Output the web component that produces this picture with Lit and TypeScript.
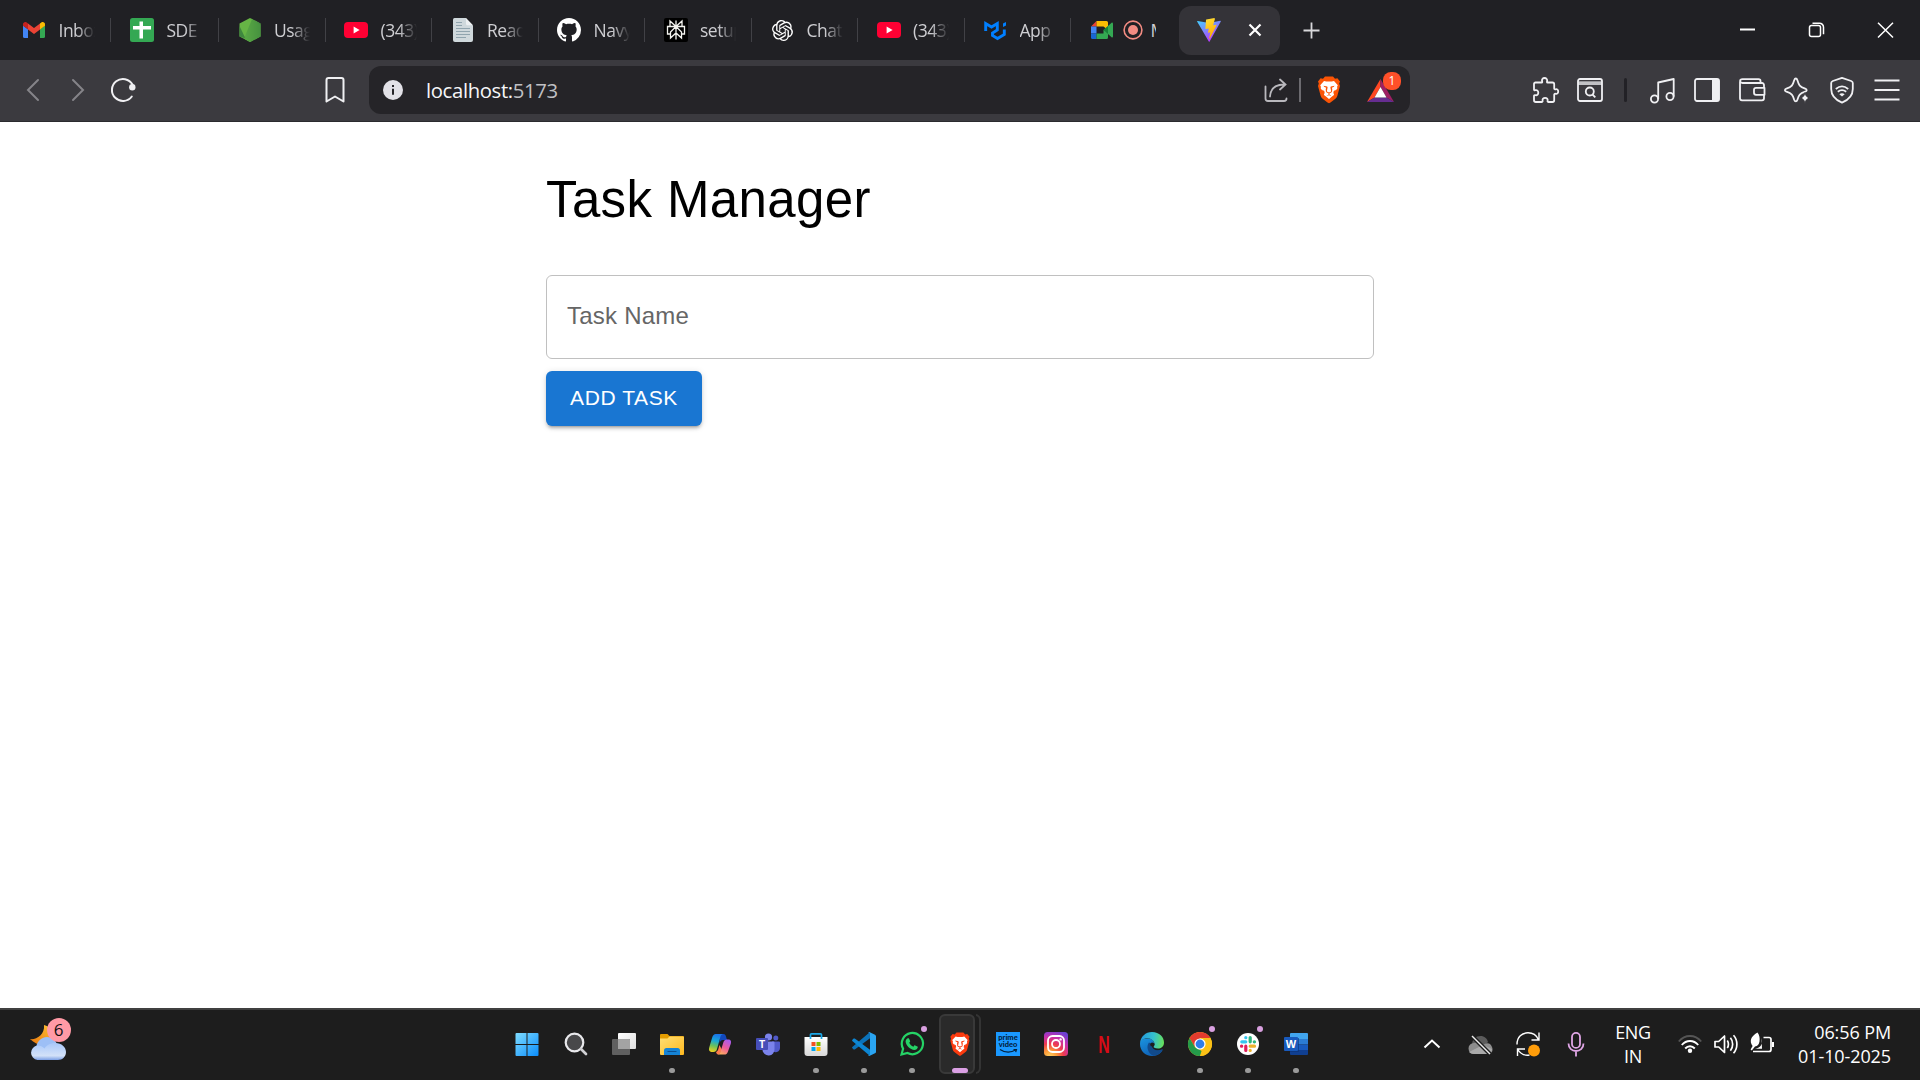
import { LitElement, html, svg, css, nothing } from "lit";
import { customElement } from "lit/decorators.js";

const lion = svg`
  <path fill="currentColor" d="M8 .5h8l2 2.200 2.400-.4L23 5.400 22.200 7.600l.8 2.400-2.700 10c-.3 1.200-1 2.100-1.900 2.800l-4.900 3.600L12 27.300l-1.500-.9-4.900-3.600c-.9-.7-1.600-1.600-1.900-2.800L1 10l.8-2.400L1 5.400l2.600-3.100 2.400.4z"/>
  <path fill="#fff" d="M7 5l2.300.6h5.400L17 5l3.800 4.200-.7 1.600.2 1.700-3.500 4.300.2 2.200-2 1.500L12 23l-3-2.500-2-1.500.2-2.200-3.500-4.300.2-1.700-.7-1.600z"/>
  <path fill="currentColor" d="M6.500 9.800l3.700.8.400 1-.8 3.900 2.200 1 2.200-1-.8-3.900.4-1 3.700-.8-.6 1-2.100.9.500 1.200-.3 3.200-2.600 1.500v1l2.400 1.300-2.800-.6-2.800.6 2.400-1.300v-1L9 16.100l-.3-3.200.5-1.200-2.100-.9zM5 13.800l2.300 1.200.4 2.500-1.500-.2zM19 13.800l-2.300 1.200-.4 2.500 1.500-.2z"/>`;

const youtube = html`<svg width="24" height="24" viewBox="0 0 24 24"><rect y="4" width="24" height="16" rx="4" fill="#ff0033"/><path fill="#fff" d="M9.600 8.600l6 3.400-6 3.400z"/></svg>`;

const tabIcons: Record<string, unknown> = {
  gmail: html`<svg width="24" height="24" viewBox="0 0 24 24"><path fill="#4285f4" d="M1 7.500l5 3.700V20H2.500A1.500 1.500 0 0 1 1 18.500z"/><path fill="#34a853" d="M23 7.500l-5 3.700V20h3.500a1.500 1.500 0 0 0 1.500-1.500z"/><path fill="#fbbc04" d="M18 5.400l1.300-1C20.900 3.200 23 4.300 23 6.200v1.600l-5 3.800z"/><path fill="#ea4335" d="M6 5.400l6 4.500 6-4.500v6.200l-6 4.500-6-4.500z"/><path fill="#c5221f" d="M1 6.200c0-1.900 2.100-3 3.700-1.800L6 5.400v6.200L1 7.800z"/></svg>`,
  sheet: html`<svg width="24" height="24" viewBox="0 0 24 24"><rect width="24" height="24" rx="2.500" fill="#34a853"/><path fill="#fff" d="M9.500 3.500H13V8h8v3.500h-8v9H9.500v-9H3V8h6.500z"/></svg>`,
  node: html`<svg width="24" height="24" viewBox="0 0 24 24"><defs><linearGradient id="nd" x1="0" y1="0" x2="1" y2="0"><stop stop-color="#6cbb4c"/><stop offset="1" stop-color="#3f873f"/></linearGradient></defs><path fill="#66b545" d="M12 0l10.500 5.500v13L12 24 1.500 18.500v-13z"/><path fill="url(#nd)" d="M12 0l10.500 5.500v13L12 24l-6-3.500 8-19z"/><path fill="#3f873f" d="M1.500 8l6 12.500-6-2z"/><path fill="#4d9a40" d="M14 1.500l-8 19L12 24l10.500-5.500V7z" opacity=".55"/></svg>`,
  youtube,
  doc: html`<svg width="24" height="24" viewBox="0 0 24 24"><path fill="#cfd8dc" d="M3.500 0H15l7 7.200V22a2 2 0 0 1-2 2H4a2 2 0 0 1-2-2V1.500A1.500 1.500 0 0 1 3.500 0z"/><path fill="#202024" d="M15 0h7v7.500z"/><path fill="#eceff1" d="M15 0v5.700A1.500 1.500 0 0 0 16.500 7.200H22z"/><path stroke="#90a4ae" stroke-width="1" d="M5 4.500h6M5 7.500h6M5 10.500h14M5 13.500h14M5 16.500h14M5 19.500h10"/></svg>`,
  github: html`<svg width="24" height="24" viewBox="0 0 16 16"><path fill="#fff" d="M8 0C3.580 0 0 3.580 0 8c0 3.540 2.290 6.530 5.470 7.590.4.070.55-.17.55-.38 0-.19-.01-.82-.01-1.490-2.010.37-2.530-.49-2.690-.94-.09-.23-.48-.94-.82-1.130-.28-.15-.68-.52-.01-.53.630-.01 1.080.58 1.230.82.720 1.210 1.870.87 2.330.66.070-.52.280-.87.510-1.070-1.780-.2-3.640-.89-3.640-3.950 0-.87.310-1.590.820-2.150-.08-.2-.36-1.020.080-2.120 0 0 .67-.21 2.200.820.640-.18 1.320-.27 2-.27.680 0 1.360.09 2 .27 1.530-1.040 2.200-.82 2.200-.82.440 1.100.160 1.920.080 2.120.510.560.820 1.270.820 2.150 0 3.070-1.870 3.750-3.650 3.950.290.250.540.730.540 1.480 0 1.070-.01 1.930-.01 2.200 0 .21.150.460.550.380A8.013 8.013 0 0016 8c0-4.420-3.580-8-8-8z"/></svg>`,
  perplexity: html`<svg width="24" height="24" viewBox="0 0 24 24"><rect width="24" height="24" rx="2" fill="#000"/><path fill="none" stroke="#f4f4f0" stroke-width="1.300" d="M12 2.500v19M6 3l6 5.500L18 3v5.500H6zM12 8.500L6.500 14v6L12 15l5.500 5v-6zM6.500 16H3.500V8.500h17V16h-3"/></svg>`,
  openai: html`<svg width="21" height="21" viewBox="0 0 24 24"><path fill="#fff" d="M22.2819 9.8211a5.9847 5.9847 0 0 0-.5157-4.9108 6.0462 6.0462 0 0 0-6.5098-2.9A6.0651 6.0651 0 0 0 4.9807 4.1818a5.9847 5.9847 0 0 0-3.9977 2.9 6.0462 6.0462 0 0 0 .7427 7.0966 5.98 5.98 0 0 0 .511 4.9107 6.051 6.051 0 0 0 6.5146 2.9001A5.9847 5.9847 0 0 0 13.2599 24a6.0557 6.0557 0 0 0 5.7718-4.2058 5.9894 5.9894 0 0 0 3.9977-2.9001 6.0557 6.0557 0 0 0-.7475-7.0729zm-9.022 12.6081a4.4755 4.4755 0 0 1-2.8764-1.0408l.1419-.0804 4.7783-2.7582a.7948.7948 0 0 0 .3927-.6813v-6.7369l2.02 1.1686a.071.071 0 0 1 .038.052v5.5826a4.504 4.504 0 0 1-4.4945 4.4944zm-9.6607-4.1254a4.4708 4.4708 0 0 1-.5346-3.0137l.142.0852 4.783 2.7582a.7712.7712 0 0 0 .7806 0l5.8428-3.3685v2.3324a.0804.0804 0 0 1-.0332.0615L9.74 19.9502a4.4992 4.4992 0 0 1-6.1408-1.6464zM2.3408 7.8956a4.485 4.485 0 0 1 2.3655-1.9728V11.6a.7664.7664 0 0 0 .3879.6765l5.8144 3.3543-2.0201 1.1685a.0757.0757 0 0 1-.071 0l-4.8303-2.7865A4.504 4.504 0 0 1 2.3408 7.872zm16.5963 3.8558L13.1038 8.364 15.1192 7.2a.0757.0757 0 0 1 .071 0l4.8303 2.7913a4.4944 4.4944 0 0 1-.6765 8.1042v-5.6772a.79.79 0 0 0-.407-.667zm2.0107-3.0231l-.142-.0852-4.7735-2.7818a.7759.7759 0 0 0-.7854 0L9.409 9.2297V6.8974a.0662.0662 0 0 1 .0284-.0615l4.8303-2.7866a4.4992 4.4992 0 0 1 6.6802 4.66zM8.3065 12.863l-2.02-1.1638a.0804.0804 0 0 1-.038-.0567V6.0742a4.4992 4.4992 0 0 1 7.3757-3.4537l-.142.0805L8.704 5.459a.7948.7948 0 0 0-.3927.6813zm1.0976-2.3654l2.602-1.4998 2.6069 1.4998v2.9994l-2.5974 1.4997-2.6067-1.4997Z"/></svg>`,
  mui: html`<svg width="24" height="24" viewBox="0 0 24 24"><path fill="none" stroke="#007fff" stroke-width="2.900" d="M2.700 13V5.500L8.500 9l5.800-3.500V12L9.500 15v2.500l5 3 6.800-4v-5"/><path fill="#007fff" d="M20 5.500L23 4v3.500L20 9z"/></svg>`,
  meet: html`<svg width="24" height="24" viewBox="0 0 24 24"><path fill="#ea4335" d="M1 8.500L6.500 3v5.500z"/><path fill="#4285f4" d="M1 8.500h5.500v7H1z"/><path fill="#1967d2" d="M1 15.500h5.500V21H2.500A1.500 1.500 0 0 1 1 19.500z"/><path fill="#fbbc04" d="M6.500 3H16.500A1.500 1.500 0 0 1 18 4.500V12l-4.500-3.500h-7z"/><path fill="#34a853" d="M6.500 15.500h7V12L18 8v11.500a1.500 1.500 0 0 1-1.500 1.500h-10z"/><path fill="#188038" d="M18 8v8l-4.500-4z"/><path fill="#34a853" d="M18 8l3.600-3.200c.5-.4 1.400-.1 1.400.7v13c0 .8-.9 1.100-1.400.7L18 16z"/></svg>`,
};

interface Tab { icon: string; label: string; kind?: string; recording?: boolean; }
const tabs: Tab[] = [
  { icon: "gmail", label: "Inbox", kind: "first" },
  { icon: "sheet", label: "SDE", kind: "second" },
  { icon: "node", label: "Usage" },
  { icon: "youtube", label: "(343)" },
  { icon: "doc", label: "Read" },
  { icon: "github", label: "Navy" },
  { icon: "perplexity", label: "setup" },
  { icon: "openai", label: "Chat" },
  { icon: "youtube", label: "(343)" },
  { icon: "mui", label: "App" },
  { icon: "meet", label: "M", kind: "last", recording: true },
];

const tools = [
  svg`<path d="M2.500 5.500h6.200c.7 0 .6-.8.4-1.300C8.500 2.500 9.700 1 11.500 1s3.200 1.500 2.600 3.200c-.2.5-.3 1.300.4 1.300H19.500c1 0 1.700.7 1.700 1.700v4.300c0 .8.900 1 1.500.8 1.300-.4 2.500.5 2.500 2.200s-1.200 2.700-2.500 2.300c-.6-.2-1.500 0-1.500.8v5.700c0 1-.7 1.700-1.700 1.700h-4.200c-.8 0-.9-.8-.7-1.400.4-1.500-.8-2.800-2.500-2.800s-2.900 1.300-2.500 2.800c.2.600 0 1.400-.7 1.400H2.800C1.700 25 1 24.300 1 23.300v-4.300c0-.8.600-1 1.300-.8 1.700.5 3-.8 3-2.500s-1.300-3-3-2.500c-.7.2-1.300 0-1.300-.8V7c0-1 .6-1.500 1.500-1.500z"/>`,
  svg`<rect x="1" y="2" width="24" height="22" rx="2"/><path d="M1 7h24M1 5.200h24" stroke-width="1.300"/><circle cx="12.800" cy="14.500" r="4"/><path d="M15.500 17.500l2.800 2.800"/>`,
  svg`<circle cx="5.500" cy="22" r="3.600"/><circle cx="21" cy="19.500" r="3.600"/><path d="M9.200 22V5.500L24.700 2v17.500"/>`,
  svg`<rect x="1" y="2" width="24" height="22" rx="2"/><path fill="currentColor" stroke="none" d="M18 2h5.500A2 2 0 0 1 25.500 4v18a2 2 0 0 1-2 2H18z"/>`,
  svg`<path d="M25 11V8a2 2 0 0 0-2-2H3.500C.3 6 .3 2.200 3.500 2.200h16c1.200 0 2 .8 2 1.800v2M1 4.500v16.800a2 2 0 0 0 2 2h20a2 2 0 0 0 2-2v-3.500"/><path d="M25.500 10.800H17a2 2 0 0 0-2 2v3a2 2 0 0 0 2 2h8.500z"/>`,
  svg`<path d="M11.800 1.500c1 0 1.300.8 1.600 1.700 1.500 5 2.200 6.500 7.800 8.500.9.3 1.500.8 1.500 1.500s-.6 1.100-1.500 1.500c-5.600 2-6.300 3-7.800 8-.3 1-.7 1.600-1.600 1.600s-1.300-.7-1.600-1.600c-1.500-5-2.200-6-7.800-8-.9-.4-1.500-.8-1.500-1.500s.6-1.200 1.500-1.500c5.600-2 6.300-3.500 7.800-8.500.3-.9.7-1.700 1.600-1.700z"/><path fill="currentColor" stroke="#3b3a3f" stroke-width="1" d="M21 15.500c1 3.800 1.500 4.500 5 5.500-3.500 1-4 1.700-5 5.500-1-3.800-1.500-4.500-5-5.500 3.500-1 4-1.700 5-5.500z"/>`,
  svg`<path d="M13 .8L22.200 4c1 .4 1.600 1 1.600 2V12c0 7-4 10.800-10.800 13.700C6.200 22.800 2.200 19 2.200 12V6c0-1 .6-1.600 1.600-2z"/><path d="M6.800 12c4-3.300 8.400-3.300 12.400 0M8.800 14.800c2.700-2.200 5.700-2.200 8.400 0"/><path fill="currentColor" stroke="none" d="M10.300 17.200c1.700-1.300 3.700-1.300 5.400 0L13 19.500z"/>`,
  svg`<path d="M.5 3.500h25M.5 13h25M.5 22.500h25" stroke-width="2"/>`,
];

interface App { name: string; art: unknown; running?: boolean; alert?: boolean; active?: boolean; }
const apps: App[] = [
  { name: "start", art: svg`<defs><linearGradient id="wn" x1="0" y1="0" x2="1" y2="1"><stop stop-color="#7fdcff"/><stop offset="1" stop-color="#0a8dfc"/></linearGradient></defs><path fill="url(#wn)" d="M.5 2q0-1 1-1H11.500V12H.5zM12.500 1h10q1 0 1 1v10H12.500zM.5 13h11v11h-10q-1 0-1-1zM12.500 13h11V23q0 1-1 1h-10z" transform="translate(-1)"/>` },
  { name: "search", art: svg`<circle cx="10.500" cy="10.500" r="8.800" fill="#48484a" stroke="#e9e9ec" stroke-width="2.200"/><path d="M17 17l5 5" stroke="#d0d0d3" stroke-width="2.700" stroke-linecap="round"/>` },
  { name: "views", art: svg`<defs><linearGradient id="tv" x1="0" y1="0" x2="1" y2="1"><stop stop-color="#fff"/><stop offset="1" stop-color="#dedede"/></linearGradient></defs><rect x="6" y="1" width="18" height="16" rx="1" fill="url(#tv)"/><rect y="7" width="18" height="16" rx="1" fill="#606060"/><path fill="#a3a3a3" d="M6 7h11q1 0 1 1v9H6z"/>` },
  { name: "files", running: true, art: svg`<defs><linearGradient id="fe" x1="0" y1="0" x2="1" y2="1"><stop stop-color="#ffdf75"/><stop offset="1" stop-color="#ffb91f"/></linearGradient></defs><path fill="#e39c00" d="M0 3q0-1 1-1h6.500l2 2H23q1 0 1 1v6H0z"/><path fill="url(#fe)" d="M0 6.500h7.500l2-2H23q1 0 1 1V22q0 1-1 1H1q-1 0-1-1z"/><path fill="#1583d6" d="M4 23v-4.500Q4 16 6.500 16h11q2.500 0 2.500 2.500V23z"/><path stroke="#0b4f91" d="M7.500 19.500h9"/>` },
  { name: "copilot", art: svg`<defs><linearGradient id="ca" x1=".4" y1="0" x2=".2" y2="1"><stop stop-color="#1b75e8"/><stop offset=".35" stop-color="#18a8d8"/><stop offset=".65" stop-color="#6cc05a"/><stop offset="1" stop-color="#f3d21c"/></linearGradient><linearGradient id="cb" x1=".7" y1="0" x2=".2" y2="1"><stop stop-color="#a95bee"/><stop offset=".5" stop-color="#ee5b9b"/><stop offset="1" stop-color="#ffb259"/></linearGradient></defs><path fill="#1248bd" d="M12 2h3.500c1.500 0 2 1 2.500 2.600l1 3.400h-4c-2 0-3 1.500-3.500 3.500z"/><path fill="url(#ca)" d="M7.800 2H15c-1.600.3-2.300 1.800-2.800 3.500L9 17c-.7 2.300-1.500 3-3.500 3h-2C1.200 20 .5 18 1.200 15.600l3-10C4.900 3.200 6 2 7.800 2z"/><path fill="#ff7b4c" d="M8 20c1.300-.4 2-1.700 2.500-3.500l1-3.500L14 18l-3 4.500c-1.700 0-2.400-.5-3-2.500z"/><path fill="url(#cb)" d="M16.200 22.500H10c1.500-.5 2.300-2 2.800-3.700L15.500 10c.6-1.700 1.600-2.600 3.500-2.600h1.500c2.300 0 3 1.900 2.300 4.300l-2.900 8c-.7 2-1.800 2.800-3.700 2.800z"/>` },
  { name: "teams", art: svg`<circle cx="12.500" cy="5" r="3.600" fill="#7b83eb"/><circle cx="19.800" cy="6" r="2.500" fill="#5059c9"/><path fill="#5059c9" d="M16 9.500h7q1 0 1 1V16a4.500 4.500 0 0 1-8 2.500z"/><path fill="#7b83eb" d="M7 9.500h10.500q1 0 1 1V17a6 6 0 0 1-12 1z"/><rect y="6" width="12" height="12" rx="1" fill="#464eb8"/><text x="6" y="15.600" class="glyph" font-size="10">T</text>` },
  { name: "store", running: true, art: svg`<defs><linearGradient id="st" x1="0" y1="0" x2="0" y2="1"><stop stop-color="#fff"/><stop offset="1" stop-color="#d9d9d9"/></linearGradient></defs><path fill="url(#st)" d="M.5 5h23v16q0 3-3 3h-17q-3 0-3-3z"/><path fill="none" stroke="#1ba8e8" stroke-width="1.700" d="M6.500 7V2.800q0-1 1-1h9q1 0 1 1V7"/><path fill="#f25022" d="M7.500 10h4v4h-4z"/><path fill="#7fba00" d="M12.500 10h4v4h-4z"/><path fill="#00a4ef" d="M7.500 15h4v4h-4z"/><path fill="#ffb900" d="M12.500 15h4v4h-4z"/>` },
  { name: "code", running: true, art: svg`<path fill="#0b72b9" d="M.3 15.100q-.5.700.1 1.200l1.200 1.100q.6.400 1.200 0L18 6.300V0z"/><path fill="#0d86d3" d="M.3 8.900q-.5-.7.1-1.200l1.200-1.100q.6-.4 1.200 0L18 17.700V24z"/><path fill="#2aa5f2" d="M17.300.1L23 2.700q1 .5 1 1.500v15.600q0 1-1 1.500l-5.700 2.600q-.9.200-1.300-.5 2 .6 2-1V2q0-1.800-2-1.300.4-.8 1.300-.6z"/>` },
  { name: "whatsapp", running: true, alert: true, art: svg`<path fill="none" stroke="#25d366" stroke-width="2.200" d="M1.500 22.500l1.600-5.800A10.600 10.600 0 1 1 7.500 21z"/><path fill="#25d366" d="M8.200 6.300c.5 0 .8.100 1 .6l.9 2.100c.2.500-.1.900-.9 1.800 1 2 2.300 3.100 4.200 3.900.9-1.100 1.200-1.500 1.700-1.300l2.300 1.100c.4.200.4.500.4.800-.2 1.600-1.800 2.600-3.300 2.600-4.500-.5-8.200-4-8.900-8.200 0-1.600 1-3.300 2.600-3.400z"/>` },
  { name: "brave", active: true, art: svg`<g color="#fb3b0f" transform="translate(1.500 0) scale(.87 .88)">${lion}</g>` },
  { name: "prime", art: svg`<rect width="24" height="24" fill="#1a98ff"/><text x="12" y="8.300" class="glyph ink" font-size="7.500">prime</text><text x="12" y="15.300" class="glyph ink" font-size="7.500">video</text><path fill="none" stroke="#04203c" stroke-width="1.200" d="M4 17.500c5 3.300 11 3.300 16 .3M17.500 17.500h3l-.8 2.700"/>` },
  { name: "instagram", art: svg`<defs><radialGradient id="ig" cx=".25" cy="1.050" r="1.150"><stop stop-color="#ffd665"/><stop offset=".25" stop-color="#fb9a38"/><stop offset=".5" stop-color="#ee3b4f"/><stop offset=".75" stop-color="#c62fae"/><stop offset="1" stop-color="#6c41d3"/></radialGradient></defs><rect width="24" height="24" rx="3.500" fill="url(#ig)"/><g fill="none" stroke="#fff" stroke-width="1.800"><rect x="4" y="4" width="16" height="16" rx="4.500"/><circle cx="12" cy="12" r="4"/></g><circle cx="16.600" cy="7.400" r="1.200" fill="#fff"/>` },
  { name: "netflix", art: svg`<text x="12" y="20.500" class="glyph netflix" font-size="24" textLength="11.500" lengthAdjust="spacingAndGlyphs">N</text>` },
  { name: "edge", art: svg`<defs><linearGradient id="e1" x1="0" y1=".4" x2="1" y2=".5"><stop stop-color="#2297dd"/><stop offset=".55" stop-color="#35c1cf"/><stop offset="1" stop-color="#67e05a"/></linearGradient><linearGradient id="e2" x1="0" y1="0" x2=".6" y2="1"><stop stop-color="#1a94e0"/><stop offset="1" stop-color="#0f5fb4"/></linearGradient></defs><path fill="url(#e2)" d="M0 12C0 7 4 6.500 8 6.500c4 0 6 2.500 6 5-4-2-5.500 9.500 8.500 6.800C20 22.500 16 24 12 24 5 24 0 18.500 0 12z"/><path fill="#114a8b" d="M9 10.500c-3 3.500-1.500 11 4.500 13.300 4.500-.3 7.500-2.800 9.300-6 .3-.6-.3-.8-.8-.5-5.500 2.500-11.500-.300-9.500-4.800z"/><path fill="url(#e1)" d="M0 11.500C.5 4.500 5.500 0 12 0c7.500 0 12 5.200 12 10.500 0 4-3 6-6 6-3.300 0-4.800-1.200-4.300-2 .8-1 1.300-2 .6-3.800C13.200 8 10.500 6.300 7.500 6.300 3.500 6.300.7 8.500 0 11.500z"/><circle cx="12.200" cy="12.600" r="2" fill="#1d1d1d"/>` },
  { name: "chrome", running: true, alert: true, art: svg`<circle cx="12" cy="12" r="12" fill="#fbc116"/><path fill="#e33b2e" d="M1.600 6A12 12 0 0 1 22.400 6H12L6.800 15z"/><path fill="#249b4a" d="M1.600 6l5.200 9 5.200 3 1.500 1L12 24A12 12 0 0 1 1.600 6z"/><path fill="#fbc116" d="M22.400 6A12 12 0 0 1 12 24l5.200-9L16 6z"/><circle cx="12" cy="12" r="5.600" fill="#fff"/><circle cx="12" cy="12" r="4.400" fill="#2f7de9"/>` },
  { name: "slack", running: true, alert: true, art: svg`<circle cx="12" cy="12" r="11" fill="#fff"/><g stroke-width="3.200" stroke-linecap="round"><path stroke="#36c5f0" d="M5.800 9.800h4M9.800 5.500v.2"/><path stroke="#2eb67d" d="M14.200 5.500v4.300M18.500 9.800h-.2"/><path stroke="#ecb22e" d="M14.200 14.200h4.300M14.200 18.500v-.2"/><path stroke="#e01e5a" d="M9.800 14.200v4.300M5.500 14.200h.2"/></g>` },
  { name: "word", running: true, art: svg`<path fill="#41a5ee" d="M6 2q0-1 1-1h16q1 0 1 1v5H6z"/><path fill="#2b7cd3" d="M6 7h18v5.500H6z"/><path fill="#185abd" d="M6 12.500h18V18H6z"/><path fill="#103f91" d="M6 18h18v4q0 1-1 1H7q-1 0-1-1z"/><path fill="#0c3275" opacity=".6" d="M6 6h9v14H6z"/><rect y="5" width="14" height="14" rx="1" fill="#185abd"/><text x="7" y="15.800" class="glyph" font-size="11">W</text>` },
];

@customElement("app-root")
export class AppRoot extends LitElement {
  static styles = css`
    :host { display: flex; flex-direction: column; width: 1920px; height: 1080px; overflow: hidden; background: #fff; font-family: "Open Sans", "Noto Sans", sans-serif; }
    * { box-sizing: border-box; }
    svg { display: block; flex: none; overflow: visible; }
    .tabbar { flex: none; height: 60px; background: #202024; display: flex; align-items: center; color: #ceced2; font-size: 17.500px; }
    .tab { position: relative; width: 106.500px; height: 24px; display: flex; align-items: center; padding-left: 18.500px; border-right: 1px solid #414146; }
    .tab.first { width: 111px; padding-left: 22px; }
    .tab.second { width: 108px; padding-left: 19px; }
    .tab.last { width: 108px; border: 0; }
    .fav { width: 24px; display: grid; place-items: center; }
    .rec { margin-left: 9px; }
    .label { margin-left: 12.500px; width: 36px; overflow: hidden; white-space: nowrap; line-height: 26px; letter-spacing: -.5px; mask-image: linear-gradient(90deg, #000 50%, transparent 100%); }
    .last .label { margin-left: 8px; width: 5px; mask-image: none; }
    .current { width: 101px; height: 49px; border-radius: 12px; background: #343338; display: flex; align-items: center; justify-content: space-between; padding: 0 18px; }
    .new { margin-left: 22.500px; }
    .window { margin-left: auto; display: flex; }
    .window svg { width: 69px; }
    .toolbar { flex: none; height: 62px; padding-bottom: 1px; background: #3b3a3f; border-bottom: 1px solid #2b2a2e; display: flex; align-items: center; color: #f0f0f3; }
    .nav { display: flex; align-items: center; width: 369px; padding-left: 20px; }
    .nav .dim { color: #858489; }
    .nav .mark { margin-left: 186px; }
    .address { width: 1041px; height: 48px; border-radius: 12px; background: #252428; display: flex; align-items: center; padding-left: 14px; }
    .url { margin-left: 23px; font-size: 20.300px; letter-spacing: -.35px; line-height: 28px; color: #f6f6f8; flex: 1; }
    .port { color: #c0c0c4; }
    .bar { width: 2px; height: 24px; background: #6c6b70; margin: 0 16px 0 11px; }
    .rewards { position: relative; margin: 0 16px 0 26px; }
    .badge { position: absolute; left: 16px; top: -7px; width: 18px; height: 18px; border-radius: 8px; background: #ff5029; color: #fff; font-size: 12px; line-height: 18px; text-align: center; }
    .tools { display: flex; align-items: center; gap: 19px; margin-left: 123px; }
    .tools svg:nth-child(2) { margin-left: -1px; }
    .tools .gap { width: 3px; height: 24px; border-radius: 2px; background: #222126; margin: 0 2.500px 0 2px; }
    .page { flex: 1; width: 828px; margin: 0 auto; display: flex; flex-direction: column; align-items: flex-start; font-family: "Liberation Sans", Arial, sans-serif; padding-top: 46px; }
    h1 { margin: 0 0 44px; font-size: 51px; line-height: 63px; font-weight: 400; letter-spacing: .375px; color: #000; }
    .field { width: 828px; height: 84px; border: 1px solid #c0c0c0; border-radius: 6px; padding: 0 20px; margin-bottom: 12px; font-size: 24px; line-height: 80px; letter-spacing: .225px; color: #666; }
    .add { width: 156px; height: 55px; padding: 0 0 2px; border: 0; border-radius: 6px; background: #1976d2; color: #fff; font: 500 21px/52px "Liberation Sans", Arial, sans-serif; letter-spacing: .6px; text-align: center; box-shadow: 0 4px 2px -3px rgba(0,0,0,.2), 0 3px 3px rgba(0,0,0,.14), 0 1px 7px rgba(0,0,0,.12); }
    .taskbar { flex: none; height: 72px; background: #1d1d1d; border-top: 2px solid #404040; display: flex; align-items: stretch; color: #fff; }
    .weather { position: relative; width: 504px; padding: 15px 0 0 30px; }
    .count { position: absolute; left: 46.500px; top: 8px; width: 24px; height: 24px; border-radius: 50%; background: #ff9aa6; color: #111; font-size: 17px; line-height: 24px; text-align: center; }
    .apps { display: flex; }
    .app { position: relative; width: 48px; display: grid; place-items: center; padding-bottom: 2px; }
    .app > svg { position: relative; }
    .glyph { font-family: "Liberation Sans", Arial, sans-serif; font-weight: 700; fill: #fff; text-anchor: middle; }
    .glyph.ink { fill: #04203c; font-family: Lato, sans-serif; font-weight: 900; }
    .glyph.netflix { fill: #d80b16; }
    .dot { position: absolute; left: 21px; top: 58px; width: 6px; height: 5px; border-radius: 3px; background: #9a9a9a; }
    .alert { position: absolute; left: 33px; top: 16px; width: 6px; height: 6px; border-radius: 50%; background: #d9a0e0; }
    .focus { position: absolute; left: 3px; top: 4px; width: 36px; height: 60px; border: 2px solid #393939; border-radius: 6px; background: #2a2a2a; }
    .stack { position: absolute; left: 34px; top: 4px; width: 11px; height: 60px; border: 2px solid #343434; border-left: 0; border-radius: 0 6px 6px 0; clip-path: inset(0 0 0 6px); }
    .pill { position: absolute; left: 16px; top: 58px; width: 16px; height: 5px; border-radius: 3px; background: #dba0e4; }
    .tray { margin-left: auto; display: flex; align-items: center; font-size: 18px; line-height: 24px; letter-spacing: -.4px; padding: 0 29px 2px 0; }
    .tray svg + svg { margin-left: 24px; }
    .lang { width: 60px; margin-left: 15px; text-align: center; }
    .status { display: flex; margin-left: 15px; }
    .status svg + svg { margin-left: 12px; }
    .clock { width: 117px; text-align: right; white-space: nowrap; letter-spacing: -.1px; }
  `;

  private tab(t: Tab) {
    return html`<div class="tab ${t.kind ?? ""}"><span class="fav">${tabIcons[t.icon]}</span>
      ${t.recording ? html`<svg class="rec" width="20" height="20" viewBox="0 0 20 20"><circle cx="10" cy="10" r="8.900" fill="none" stroke="#f28b82" stroke-width="1.600"/><circle cx="10" cy="10" r="5" fill="#f28b82"/></svg>` : nothing}
      <span class="label">${t.label}</span></div>`;
  }

  private app(a: App) {
    return html`<div class="app">
      ${a.active ? html`<span class="stack"></span><span class="focus"></span>` : nothing}
      <svg width="24" height="24" viewBox="0 0 24 24">${a.art}</svg>
      ${a.active ? html`<span class="pill"></span>` : nothing}
      ${a.running ? html`<span class="dot"></span>` : nothing}
      ${a.alert ? html`<span class="alert"></span>` : nothing}
    </div>`;
  }

  private tool(art: unknown) {
    return html`<svg width="26" height="26" viewBox="0 0 26 26" fill="none" stroke="currentColor" stroke-width="1.800" stroke-linejoin="round">${art}</svg>`;
  }

  render() {
    return html`
      <div class="tabbar">
        ${tabs.map((t) => this.tab(t))}
        <div class="current">
          <svg width="24" height="24" viewBox="0 0 24 24"><defs><linearGradient id="va" x1="0" y1="0" x2=".6" y2="1"><stop stop-color="#41d1ff"/><stop offset="1" stop-color="#bd34fe"/></linearGradient><linearGradient id="vb" x1=".3" y1="0" x2=".6" y2="1"><stop stop-color="#ffdd35"/><stop offset="1" stop-color="#ffa800"/></linearGradient></defs><path fill="url(#va)" d="M23.800 3.500L12.600 23.600q-.4.600-.8 0L.1 3.600q-.3-.8.600-.7L12.200 5l11-2.200q.9 0 .6.700z"/><path fill="url(#vb)" d="M17.500 0L9.300 1.600q-.3.100-.3.400L8.400 10.700q0 .5.500.4l2.400-.6q.5 0 .4.500l-.7 3.400q0 .5.500.4l1.400-.5q.5 0 .4.500l-1.100 5.500c0 .4.400.5.600.2l6.800-13.300q.2-.6-.5-.5l-2.500.5q-.4 0-.3-.5l1.700-6q0-.4-.5-.3z"/></svg>
          <svg width="14" height="14" viewBox="0 0 14 14"><path stroke="#fff" stroke-width="2.200" d="M1.500 1.500l11 11M12.500 1.500l-11 11"/></svg>
        </div>
        <svg class="new" width="17" height="17" viewBox="0 0 17 17"><path stroke="#d8d8db" stroke-width="1.800" d="M8.500.5v16M.5 8.500h16"/></svg>
        <div class="window">
          <svg height="16" viewBox="0 0 69 16"><path stroke="#fff" stroke-width="2" d="M27 7.500h15"/></svg>
          <svg height="16" viewBox="0 0 69 16"><g fill="none" stroke="#fff" stroke-width="1.500"><rect x="27.500" y="3.500" width="11" height="11" rx="2"/><path d="M30.500 1.200h7a4 4 0 0 1 4 4v7"/></g></svg>
          <svg height="16" viewBox="0 0 69 16"><path stroke="#fff" stroke-width="1.500" d="M27 .8l15 14.700M42 .8L27 15.500"/></svg>
        </div>
      </div>
      <div class="toolbar">
        <div class="nav">
          <svg class="dim" width="26" height="26" viewBox="0 0 26 26" fill="none" stroke="currentColor" stroke-width="2" stroke-linecap="round"><path d="M18 3L8 13l10 10"/></svg>
          <svg class="dim" width="26" height="26" viewBox="0 0 26 26" fill="none" stroke="currentColor" stroke-width="2" stroke-linecap="round" transform="translate(19)"><path d="M8 3l10 10L8 23"/></svg>
          <svg width="26" height="26" viewBox="0 0 26 26" fill="none" stroke="currentColor" stroke-width="2" stroke-linecap="round" transform="translate(38)"><path d="M21.800 19.500A11 11 0 1 1 22.500 7.500"/><circle cx="22.300" cy="10.300" r="3.200" fill="currentColor" stroke="none"/></svg>
          <svg class="mark" width="26" height="26" viewBox="0 0 26 26" fill="none" stroke="currentColor" stroke-width="2" stroke-linejoin="round" transform="translate(38)"><path d="M6.500 1h13a2 2 0 0 1 2 2v21.500L13 19.500l-8.500 5V3a2 2 0 0 1 2-2z"/></svg>
        </div>
        <div class="address">
          <svg width="20" height="20" viewBox="0 0 20 20"><circle cx="10" cy="10" r="10" fill="#e2e1e7"/><path fill="#252428" d="M9 5h2v2H9zM9 8.800h2v6H9z"/></svg>
          <span class="url">localhost:<span class="port">5173</span></span>
          <svg width="24" height="26" viewBox="0 0 24 26" fill="none" stroke="#b9b8bd" stroke-width="1.800" stroke-linecap="round"><path d="M1.500 9.500v12a2.500 2.500 0 0 0 2.500 2.500h16a2.500 2.500 0 0 0 2.500-2.500M6 19.500C6.500 11.500 11 7.500 20.500 7.500M16 2.500l5.500 5-5.500 5"/></svg>
          <span class="bar"></span>
          <svg width="24" height="28" viewBox="0 0 24 28" color="#fb5405">${lion}</svg>
          <div class="rewards">
            <svg width="27" height="23" viewBox="0 0 27 23"><path fill="#ff4724" d="M13.500 0v8L7.500 18.500 0 23z"/><path fill="#9e1f63" d="M13.500 0L27 23l-7.500-4.500-6-10.500z"/><path fill="#662d91" d="M0 23l7.500-4.500h12L27 23z"/><path fill="#fff" d="M13.500 8l6 10.500h-12z"/></svg>
            <span class="badge">1</span>
          </div>
        </div>
        <div class="tools">
          ${tools.slice(0, 2).map((t) => this.tool(t))}
          <span class="gap"></span>
          ${tools.slice(2).map((t) => this.tool(t))}
        </div>
      </div>
      <main class="page">
        <h1>Task Manager</h1>
        <div class="field">Task Name</div>
        <button class="add">ADD TASK</button>
      </main>
      <div class="taskbar">
        <div class="weather">
          <svg width="36" height="36" viewBox="0 0 36 36"><defs><linearGradient id="mn" x1="1" y1="0" x2="0" y2="1"><stop stop-color="#ffc636"/><stop offset="1" stop-color="#e8750c"/></linearGradient><linearGradient id="cl" x1="0" y1="0" x2="0" y2="1"><stop stop-color="#a9c8fa"/><stop offset=".75" stop-color="#d3e1f8"/><stop offset="1" stop-color="#7c9fe5"/></linearGradient></defs><path fill="url(#mn)" d="M14 0c8 2 12 9 8 15S8 22 0 14c6 1 15-4 14-14z"/><path fill="#9dbff6" d="M6 24c0-7 5-12 11-12 5 0 9 3 10 8l-2 8H8z"/><path fill="url(#cl)" d="M7.500 20.500c3 0 5 1 7 3C17 19.500 21 18 25.500 18 31.500 18 36 22 36 27c0 4.500-3.500 8-8 8H7.500A7.300 7.300 0 0 1 7.500 20.500z"/></svg>
          <span class="count">6</span>
        </div>
        <div class="apps">${apps.map((a) => this.app(a))}</div>
        <div class="tray">
          <svg width="24" height="24" viewBox="0 0 24 24"><path fill="none" stroke="#fff" stroke-width="2" d="M4.500 15.500l7.500-7 7.500 7"/></svg>
          <svg width="24" height="24" viewBox="0 0 24 24"><path fill="#5b5b5b" d="M4 13C4 7 8 4 12.500 4c4 0 6.500 2.500 7.500 6l-7 8z"/><path fill="#8d8d8d" d="M6 11c4-2 6 0 9 2 3-2 7-3 9 2s-2 7-4 7H6A5.500 5.500 0 0 1 6 11z"/><path fill="#aaa" d="M1 20l14-7 9 4c0 3-2 5-4 5H6c-2 0-4-1-5-2z"/><path stroke="#1d1d1d" stroke-width="4" d="M4 4l18 18"/><path stroke="#eee" stroke-width="1.400" d="M4 4l18 18"/></svg>
          <svg width="24" height="24" viewBox="0 0 24 24"><path fill="none" stroke="#fff" stroke-width="1.400" d="M1 12.500C1 5 6 .8 12 .8c4.500 0 8.500 2.500 10.300 6.700M23 .5V8h-7.500M1.500 24v-7h7.500M1.500 17c2.500 4.500 7 6.800 12 6"/><circle cx="18" cy="18.500" r="6" fill="#ff9d0a"/></svg>
          <svg width="24" height="24" viewBox="0 0 24 24"><g fill="none" stroke="#e0a6e6" stroke-width="1.800"><rect x="8" y=".9" width="8" height="15" rx="4"/><path d="M4.500 11.500c0 10 15 10 15 0M12 19v5.500"/></g></svg>
          <div class="lang">ENG<br>IN</div>
          <div class="status">
            <svg width="24" height="24" viewBox="0 0 24 24"><g fill="none" stroke="#fff" stroke-width="1.900"><path stroke="#555" d="M.8 9.500C7 2.200 17 2.200 23.200 9.500"/><path d="M3.800 13c4.500-5.300 11.900-5.300 16.400 0M7.200 16.500c2.700-3 6.900-3 9.600 0"/></g><circle cx="12" cy="18.700" r="2.200" fill="#fff"/></svg>
            <svg width="24" height="24" viewBox="0 0 24 24"><g fill="none" stroke="#fff" stroke-width="1.700"><path stroke-linejoin="round" d="M1 9.500h3.700L10.500 4v16.500l-5.800-5.500H1zM13.300 8.500c1.500 2 1.500 5.500 0 7.500M16.400 5.800c3 3.500 3 9.400 0 12.900M19.500 3.300c4.500 5 4.500 13 0 18"/></g></svg>
            <svg width="24" height="24" viewBox="0 0 24 24"><path fill="none" stroke="#fff" stroke-width="1.700" d="M13.500 5.500H19a2 2 0 0 1 2 2v10a2 2 0 0 1-2 2H3"/><path fill="#fff" d="M22 10h2v5h-2zM7.500.5C9.500 3 10 6 9.500 9.500 9 12.500 7.500 14 5 14.500L1.800 18.500.6 17.500 2.600 14C-.8 9.500.5 4.500 7.500.5zM11.500 6c1.500 6-.5 9.500-6.500 10.800h7z"/></svg>
          </div>
          <div class="clock">06:56 PM<br>01-10-2025</div>
        </div>
      </div>`;
  }
}
